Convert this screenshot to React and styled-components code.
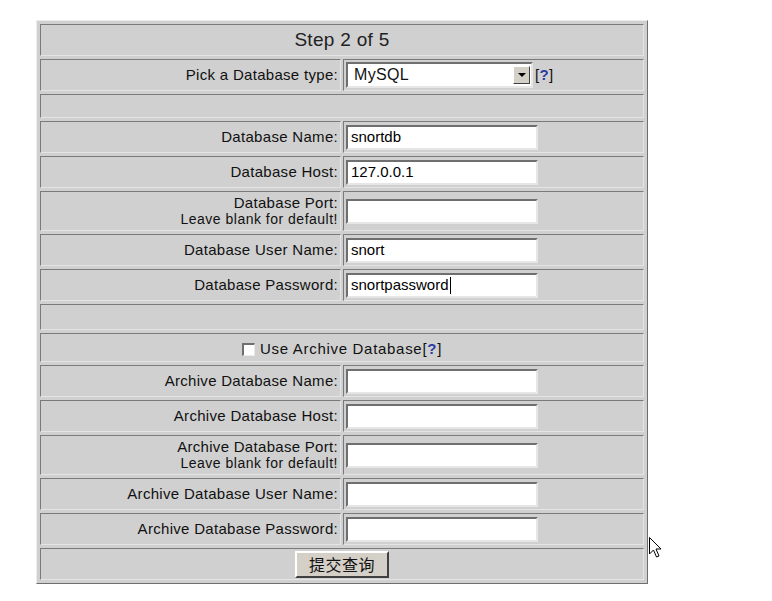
import React from 'react';
import styled, {createGlobalStyle} from 'styled-components';

const GlobalStyle = createGlobalStyle`
  html, body {
    margin: 0;
    padding: 0;
    background: #ffffff;
  }
  body {
    font-family: "Liberation Sans", Arial, sans-serif;
    color: #111;
  }
`;

const Page = styled.div`
  position: relative;
  padding: 20px 0 0 36px;
  width: 772px;
  height: 601px;
  box-sizing: border-box;
`;

const FormTable = styled.table`
  width: 612px;
  border-collapse: separate;
  border-spacing: 2px 3px;
  padding: 0 1px;
  background: #d0d0d0;
  border-top: 1px solid #ececec;
  border-left: 1px solid #ececec;
  border-right: 1px solid #6e6e6e;
  border-bottom: 1px solid #6e6e6e;
`;

const Cell = styled.td`
  width: 50%;
  height: ${p => p.$h || 28}px;
  padding: ${p => (p.$low ? '5px 2px 0' : '1px 2px')};
  background: #d0d0d0;
  border-top: 1px solid #7a7a7a;
  border-left: 1px solid #7a7a7a;
  border-right: 1px solid #e4e4e4;
  border-bottom: 1px solid #e4e4e4;
  text-align: ${p => p.$align || 'left'};
  vertical-align: middle;
  font-size: 15px;
  line-height: 16px;
  letter-spacing: 0.3px;
  white-space: nowrap;
`;

const Title = styled.span`
  font-size: 19px;
  letter-spacing: 0.3px;
  color: #222;
`;

const Hint = styled.span`
  display: block;
  font-size: 14px;
  letter-spacing: 0.5px;
`;

const Field = styled.div`
  display: flex;
  align-items: center;
  width: 192px;
  height: 25px;
  box-sizing: border-box;
  padding-left: 3px;
  background: #fff;
  border-top: 2px solid #6f6f6f;
  border-left: 2px solid #6f6f6f;
  border-right: 2px solid #e6e6e6;
  border-bottom: 2px solid #e6e6e6;
  font-size: 15px;
  letter-spacing: 0;
  color: #000;
`;

const Caret = styled.span`
  display: inline-block;
  width: 1px;
  height: 17px;
  background: #000;
  margin-left: 1px;
`;

const SelectRow = styled.div`
  display: flex;
  align-items: center;
`;

const SelectBox = styled.div`
  display: flex;
  align-items: center;
  justify-content: space-between;
  width: 187px;
  height: 26px;
  box-sizing: border-box;
  background: #fff;
  border-top: 2px solid #6f6f6f;
  border-left: 2px solid #6f6f6f;
  border-right: 2px solid #e6e6e6;
  border-bottom: 2px solid #e6e6e6;
  padding-left: 6px;
  font-size: 16px;
`;

const ArrowButton = styled.span`
  display: flex;
  align-items: center;
  justify-content: center;
  width: 17px;
  height: 18px;
  margin-right: 1px;
  background: #d4d0c8;
  border-top: 1px solid #fff;
  border-left: 1px solid #fff;
  border-right: 1px solid #404040;
  border-bottom: 1px solid #404040;
  box-sizing: border-box;

  &::after {
    content: '';
    width: 0;
    height: 0;
    border-left: 4px solid transparent;
    border-right: 4px solid transparent;
    border-top: 4px solid #000;
  }
`;

const Help = styled.span`
  font-size: 15px;
  margin-left: 2px;
`;

const HelpMark = styled.b`
  color: #2b3aa6;
  font-weight: bold;
`;

const CheckLabel = styled.label`
  display: inline-flex;
  align-items: center;
  gap: 5px;
  font-size: 15px;
  letter-spacing: 0.7px;
`;

const CheckBox = styled.span`
  display: inline-block;
  width: 13px;
  height: 13px;
  box-sizing: border-box;
  background: #fff;
  border-top: 2px solid #6f6f6f;
  border-left: 2px solid #6f6f6f;
  border-right: 1px solid #eaeaea;
  border-bottom: 1px solid #eaeaea;
`;

const SubmitButton = styled.button`
  height: 27px;
  padding: 0 12px;
  background: #d4d0c8;
  border-top: 2px solid #ffffff;
  border-left: 2px solid #ffffff;
  border-right: 2px solid #404040;
  border-bottom: 2px solid #404040;
  font-family: "Noto Sans CJK SC", "Liberation Sans", sans-serif;
  font-size: 16px;
  line-height: 20px;
  color: #111;
  letter-spacing: 0.5px;
`;

const Cursor = styled.svg`
  position: absolute;
  left: 649px;
  top: 537px;
`;

const fields = [
  {label: 'Database Name:', value: 'snortdb'},
  {label: 'Database Host:', value: '127.0.0.1'},
  {label: 'Database Port:', hint: 'Leave blank for default!', value: ''},
  {label: 'Database User Name:', value: 'snort'},
  {label: 'Database Password:', value: 'snortpassword', caret: true},
];

const archive = [
  {label: 'Archive Database Name:', value: ''},
  {label: 'Archive Database Host:', value: ''},
  {label: 'Archive Database Port:', hint: 'Leave blank for default!', value: ''},
  {label: 'Archive Database User Name:', value: ''},
  {label: 'Archive Database Password:', value: ''},
];

function FieldRow({item}) {
  const h = item.hint ? 36 : 28;
  return (
    <tr>
      <Cell $align="right" $h={h}>
        {item.label}
        {item.hint && <Hint>{item.hint}</Hint>}
      </Cell>
      <Cell $h={h}>
        <Field>
          {item.value}
          {item.caret && <Caret />}
        </Field>
      </Cell>
    </tr>
  );
}

export default function App() {
  return (
    <Page>
      <GlobalStyle />
      <FormTable>
        <tbody>
          <tr>
            <Cell colSpan={2} $align="center">
              <Title>Step 2 of 5</Title>
            </Cell>
          </tr>
          <tr>
            <Cell $align="right">Pick a Database type:</Cell>
            <Cell>
              <SelectRow>
                <SelectBox>
                  MySQL
                  <ArrowButton />
                </SelectBox>
                <Help>
                  [<HelpMark>?</HelpMark>]
                </Help>
              </SelectRow>
            </Cell>
          </tr>
          <tr>
            <Cell colSpan={2} $h={20} />
          </tr>
          {fields.map(f => (
            <FieldRow key={f.label} item={f} />
          ))}
          <tr>
            <Cell colSpan={2} $h={22} />
          </tr>
          <tr>
            <Cell colSpan={2} $align="center" $h={22} $low>
              <CheckLabel>
                <CheckBox />
                <span>
                  Use Archive Database[<HelpMark>?</HelpMark>]
                </span>
              </CheckLabel>
            </Cell>
          </tr>
          {archive.map(f => (
            <FieldRow key={f.label} item={f} />
          ))}
          <tr>
            <Cell colSpan={2} $align="center">
              <SubmitButton type="button">提交查询</SubmitButton>
            </Cell>
          </tr>
        </tbody>
      </FormTable>
      <Cursor width="13" height="21" viewBox="0 0 13 21">
        <path
          d="M0.5 0.5 L0.5 17 L4.5 13 L7.5 20 L10 19 L7 12 L12 12 Z"
          fill="#fff"
          stroke="#000"
          strokeWidth="1"
        />
      </Cursor>
    </Page>
  );
}
